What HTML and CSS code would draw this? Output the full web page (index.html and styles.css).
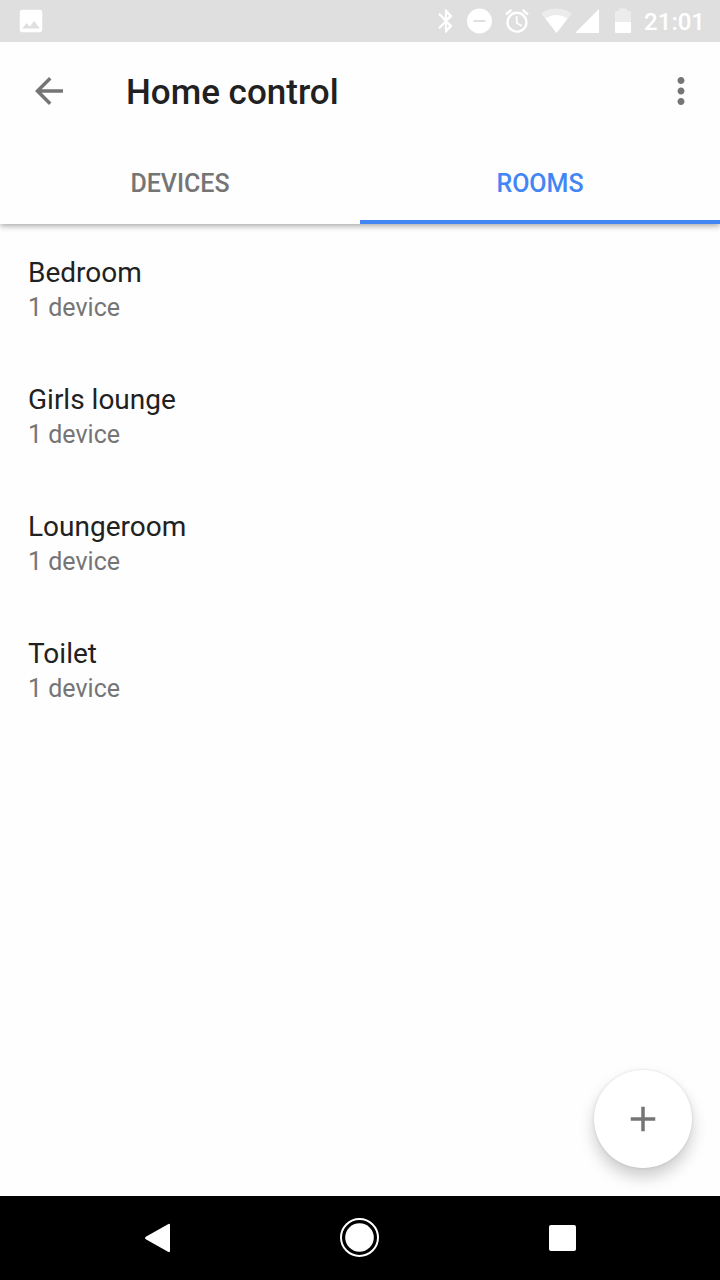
FILE: index.html
```
<!DOCTYPE html>
<html lang="en">
<head>
  <meta charset="UTF-8">
  <meta name="viewport" content="width=device-width, initial-scale=1">
  <title>Home control</title>
  <link rel="stylesheet" href="styles.css">
</head>
<body>

  <div class="status-bar">
    <svg class="notification" width="30" height="30" viewBox="0 0 24 24"><path d="M21 19V5c0-1.100-.9-2-2-2H5c-1.100 0-2 .9-2 2v14c0 1.100.9 2 2 2h14c1.100 0 2-.9 2-2zM8.500 13.500l2.500 3.010L14.500 12l4.500 6H5z"/></svg>
    <div class="status-icons">
      <svg width="16" height="26" viewBox="0 0 16 26"><path d="M14.600 7.900L8.100 1.200H6.900v8.900L1.700 5 .2 6.600 6.600 13 .2 19.400 1.700 21l5.200-5.100v8.900h1.200l6.500-6.700L9.600 13zM8.900 5.700l2.200 2.200-2.200 2.200zM11.100 18.100l-2.200 2.200v-4.400z"/></svg>
      <svg width="26" height="26" viewBox="0 0 26 26"><path fill-rule="evenodd" d="M13.500.5a12.500 12.500 0 1 0 0 25 12.500 12.500 0 0 0 0-25zM7.500 12h12v2h-12z"/></svg>
      <svg width="26" height="26" viewBox="1 1 22 22"><path d="M22 5.720l-4.600-3.860-1.290 1.530 4.600 3.860L22 5.720zM7.880 3.390L6.600 1.860 2 5.710l1.290 1.530 4.590-3.850zM12.500 8H11v6l4.750 2.850.75-1.230-4-2.370V8zM12 4c-4.970 0-9 4.030-9 9s4.020 9 9 9c4.970 0 9-4.030 9-9s-4.030-9-9-9zm0 16c-3.870 0-7-3.130-7-7s3.130-7 7-7 7 3.130 7 7-3.130 7-7 7z"/></svg>
      <div class="network">
        <svg width="32" height="26" viewBox="1 0 32 26"><path opacity=".4" d="M0 5.500Q7 .5 15.500.5T31 5.500L15.500 25z"/><path d="M4.500 10.500Q9.500 7 15.500 7t11 3.500L15.500 25z"/></svg>
        <svg width="24" height="26" viewBox="1 0 24 26"><path d="M0 25L24 1v24z"/></svg>
      </div>
      <svg width="20" height="26" viewBox="0 0 20 26"><path opacity=".4" d="M3 14V4q0-1 1-1h3V.5h8V3h3q1 0 1 1v10z"/><path d="M3 14h16v10q0 1-1 1H4q-1 0-1-1z"/></svg>
      <span class="clock">21:01</span>
    </div>
  </div>

  <header class="app-bar">
    <div class="toolbar">
      <button class="icon-button" type="button" aria-label="Back">
        <svg width="42" height="42" viewBox="0 0 24 24"><path d="M20 11H7.830l5.590-5.590L12 4l-8 8 8 8 1.410-1.410L7.830 13H20v-2z"/></svg>
      </button>
      <h1>Home control</h1>
      <button class="icon-button" type="button" aria-label="More options">
        <svg width="42" height="42" viewBox="0 0 24 24"><path d="M12 8c1.100 0 2-.9 2-2s-.9-2-2-2-2 .9-2 2 .9 2 2 2zm0 2c-1.100 0-2 .9-2 2s.9 2 2 2 2-.9 2-2-.9-2-2-2zm0 6c-1.100 0-2 .9-2 2s.9 2 2 2 2-.9 2-2-.9-2-2-2z"/></svg>
      </button>
    </div>
    <div class="tabs" role="tablist">
      <button class="tab" type="button" role="tab" aria-selected="false">DEVICES</button>
      <button class="tab active" type="button" role="tab" aria-selected="true">ROOMS</button>
    </div>
  </header>

  <main class="content">
    <ul class="rooms">
      <li class="room">
        <h2>Bedroom</h2>
        <p>1 device</p>
      </li>
      <li class="room">
        <h2>Girls lounge</h2>
        <p>1 device</p>
      </li>
      <li class="room">
        <h2>Loungeroom</h2>
        <p>1 device</p>
      </li>
      <li class="room">
        <h2>Toilet</h2>
        <p>1 device</p>
      </li>
    </ul>
    <button class="fab" type="button" aria-label="Add room">
      <svg width="42" height="42" viewBox="0 0 24 24"><path d="M19 13h-6v6h-2v-6H5v-2h6V5h2v6h6v2z"/></svg>
    </button>
  </main>

  <nav class="nav-bar">
    <button type="button" aria-label="Back">
      <svg width="42" height="42" viewBox="0 0 42 42"><path d="M9.800 19.800L32 7.200q2-1 2 1v25.600q0 2-2 1L9.800 22.200q-1.800-1.200 0-2.400z"/></svg>
    </button>
    <button type="button" aria-label="Home">
      <svg width="42" height="42" viewBox="0 0 42 42"><circle cx="20.500" cy="20.500" r="14.300"/><circle class="ring" cx="20.500" cy="20.500" r="18.500"/></svg>
    </button>
    <button type="button" aria-label="Recent apps">
      <svg width="42" height="42" viewBox="0 0 42 42"><rect x="7" y="8" width="27" height="26" rx="2"/></svg>
    </button>
  </nav>

</body>
</html>
```
FILE: styles.css
```
* { box-sizing: border-box; }

body {
  margin: 0;
  min-height: 100vh;
  display: flex;
  flex-direction: column;
  font-family: Roboto, "Noto Sans", sans-serif;
  background-color: #fefefe;
  color: #212121;
}

svg {
  display: block;
  fill: currentColor;
}

button {
  padding: 0;
  border: none;
  background: none;
  color: inherit;
  font-family: inherit;
  cursor: pointer;
}

h1, h2, p, ul {
  margin: 0;
  padding: 0;
}

/* system status bar */
.status-bar {
  position: relative;
  height: 42px;
  padding: 0 15px 0 16px;
  display: flex;
  justify-content: space-between;
  align-items: center;
  background-color: #dfdfdf;
  color: white;
}

.status-icons {
  display: flex;
  align-items: center;
  gap: 12px;
}

.network {
  display: flex;
  gap: 2px;
}

.clock {
  font-size: 24px;
  font-weight: 500;
  line-height: 28px;
  padding-top: 2px;
}

/* app bar */
.app-bar {
  background-color: #fefefe;
  box-shadow: 0 2px 6px rgba(0,0,0,0.35);
}

.toolbar {
  height: 98px;
  padding: 0 18px 0 28px;
  display: flex;
  align-items: center;
}

.icon-button {
  color: #757575;
}

.toolbar h1 {
  flex: 1;
  margin-left: 56px;
  padding-top: 2px;
  font-size: 35px;
  font-weight: 500;
}

.tabs {
  display: grid;
  grid-template-columns: 1fr 1fr;
}

.tab {
  height: 84px;
  padding-top: 6px;
  border-bottom: 4px solid transparent;
  color: #757575;
  font-size: 25px;
  font-weight: 500;
}

.tab.active {
  color: #4285f4;
  border-bottom-color: #4285f4;
}

/* room list */
.content {
  flex: 1;
  display: flex;
  flex-direction: column;
  justify-content: space-between;
}

.rooms {
  list-style: none;
}

.room {
  height: 127px;
  padding: 32px 28px;
}

.room h2 {
  font-size: 28px;
  font-weight: 400;
  line-height: 34px;
}

.room p {
  color: #757575;
  font-size: 25px;
  line-height: 36px;
}

.fab {
  align-self: flex-end;
  width: 98px;
  height: 98px;
  margin: 28px;
  display: flex;
  justify-content: center;
  align-items: center;
  border-radius: 50%;
  background-color: white;
  color: #757575;
  box-shadow: 0 9px 16px rgba(0,0,0,0.2), 0 0 3px rgba(0,0,0,0.12);
}

/* system navigation */
.nav-bar {
  height: 84px;
  padding: 0 56px;
  display: grid;
  grid-template-columns: repeat(3, 1fr);
  background-color: black;
  color: white;
}

.nav-bar button {
  display: flex;
  justify-content: center;
  align-items: center;
}

.ring {
  fill: none;
  stroke: currentColor;
  stroke-width: 2;
}
```
